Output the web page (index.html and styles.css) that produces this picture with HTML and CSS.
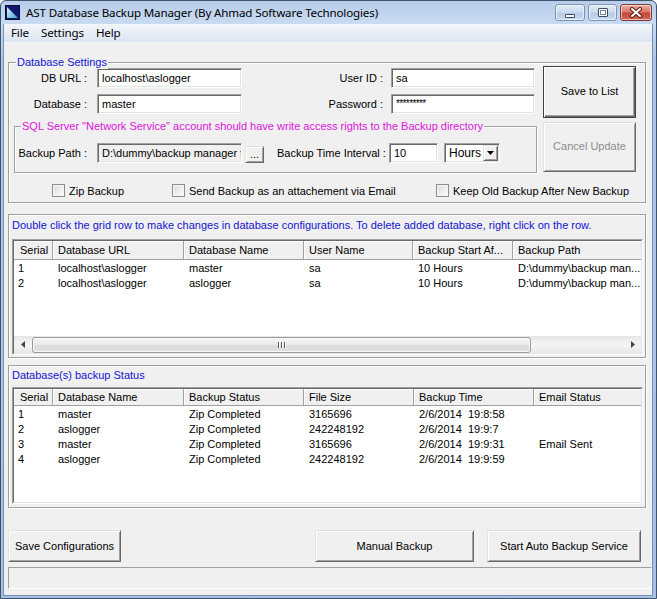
FILE: index.html
```html
<!DOCTYPE html>
<html>
<head>
<meta charset="utf-8">
<title>AST Database Backup Manager</title>
<link rel="stylesheet" href="styles.css">
</head>
<body>
<div class="window">
  <div class="titlebar">
    <svg class="app-icon" width="15" height="15" viewBox="0 0 15 15">
      <defs>
        <linearGradient id="ig" x1="0" y1="0" x2="1" y2="1">
          <stop offset="0" stop-color="#e8f4f8"/>
          <stop offset="1" stop-color="#3aa6c8"/>
        </linearGradient>
      </defs>
      <rect x="0.5" y="0.5" width="14" height="14" fill="#10186e" stroke="#0b0f2e"/>
      <polygon points="2,2 2,13 13,13" fill="url(#ig)"/>
    </svg>
    <span class="title">AST Database Backup Manager (By Ahmad Software Technologies)</span>
    <div class="caption-btns">
      <div class="cbtn"><span class="min-glyph"></span></div>
      <div class="cbtn"><span class="max-glyph"></span></div>
      <div class="cbtn close">
        <svg width="14" height="11" viewBox="0 0 14 11">
          <path d="M3 2 L11 9 M11 2 L3 9" stroke="#5a2018" stroke-width="4" stroke-linecap="round"/>
          <path d="M3 2 L11 9 M11 2 L3 9" stroke="#ffffff" stroke-width="2" stroke-linecap="round"/>
        </svg>
      </div>
    </div>
  </div>
  <div class="client">
    <div class="menubar">
      <span class="menu-item">File</span>
      <span class="menu-item">Settings</span>
      <span class="menu-item">Help</span>
    </div>
    <div class="form">
      <div class="group settings">
        <span class="group-title blue">Database Settings</span>
        <div class="settings-top">
          <div class="settings-left">
            <div class="fields">
              <span class="lbl">DB URL :</span>
              <div class="tb">localhost\aslogger</div>
              <span class="lbl lbl2">User ID :</span>
              <div class="tb">sa</div>
              <span class="lbl">Database :</span>
              <div class="tb">master</div>
              <span class="lbl lbl2">Password :</span>
              <div class="tb pw">*********</div>
            </div>
            <div class="group inner">
              <span class="group-title magenta">SQL Server "Network Service" account should have write access rights to the Backup directory</span>
              <div class="inner-row">
                <span class="lbl path-lbl">Backup Path :</span>
                <div class="tb ro path">D:\dummy\backup manager t</div>
                <div class="btn dots">...</div>
                <span class="time-lbl">Backup Time Interval :</span>
                <div class="tb num">10</div>
                <div class="combo">
                  <span class="combo-text">Hours</span>
                  <div class="combo-btn">
                    <svg width="7" height="4" viewBox="0 0 7 4"><polygon points="0,0 7,0 3.5,4" fill="#000"/></svg>
                  </div>
                </div>
              </div>
            </div>
          </div>
          <div class="settings-right">
            <div class="btn big default">Save to List</div>
            <div class="btn big disabled">Cancel Update</div>
          </div>
        </div>
        <div class="checks">
          <label class="chk"><span class="box"></span>Zip Backup</label>
          <label class="chk"><span class="box"></span>Send Backup as an attachement via Email</label>
          <label class="chk"><span class="box"></span>Keep Old Backup After New Backup</label>
        </div>
      </div>

      <div class="group panel p1">
        <div class="panel-label blue">Double click the grid row to make changes in database configurations. To delete added database, right click on the row.</div>
        <div class="lv lv1">
          <div class="lv-in">
            <div class="lv-row lv-head">
              <div class="hc">Serial</div>
              <div class="hc">Database URL</div>
              <div class="hc">Database Name</div>
              <div class="hc">User Name</div>
              <div class="hc">Backup Start Af...</div>
              <div class="hc last">Backup Path</div>
            </div>
            <div class="lv-body">
              <div class="lv-row">
                <span class="cell">1</span><span class="cell">localhost\aslogger</span><span class="cell">master</span><span class="cell">sa</span><span class="cell">10 Hours</span><span class="cell">D:\dummy\backup man...</span>
              </div>
              <div class="lv-row">
                <span class="cell">2</span><span class="cell">localhost\aslogger</span><span class="cell">aslogger</span><span class="cell">sa</span><span class="cell">10 Hours</span><span class="cell">D:\dummy\backup man...</span>
              </div>
            </div>
            <div class="hscroll">
              <div class="sarrow">
                <svg width="4" height="7" viewBox="0 0 4 7"><polygon points="4,0 4,7 0,3.5" fill="#444"/></svg>
              </div>
              <div class="strack">
                <div class="thumb">
                  <span class="grip"></span><span class="grip"></span><span class="grip"></span>
                </div>
              </div>
              <div class="sarrow">
                <svg width="4" height="7" viewBox="0 0 4 7"><polygon points="0,0 0,7 4,3.5" fill="#444"/></svg>
              </div>
            </div>
          </div>
        </div>
      </div>

      <div class="group panel p2">
        <div class="panel-label blue">Database(s) backup Status</div>
        <div class="lv lv2">
          <div class="lv-in">
            <div class="lv-row lv-head">
              <div class="hc">Serial</div>
              <div class="hc">Database Name</div>
              <div class="hc">Backup Status</div>
              <div class="hc">File Size</div>
              <div class="hc">Backup Time</div>
              <div class="hc last">Email Status</div>
            </div>
            <div class="lv-body">
              <div class="lv-row">
                <span class="cell">1</span><span class="cell">master</span><span class="cell">Zip Completed</span><span class="cell">3165696</span><span class="cell">2/6/2014&nbsp; 19:8:58</span><span class="cell"></span>
              </div>
              <div class="lv-row">
                <span class="cell">2</span><span class="cell">aslogger</span><span class="cell">Zip Completed</span><span class="cell">242248192</span><span class="cell">2/6/2014&nbsp; 19:9:7</span><span class="cell"></span>
              </div>
              <div class="lv-row">
                <span class="cell">3</span><span class="cell">master</span><span class="cell">Zip Completed</span><span class="cell">3165696</span><span class="cell">2/6/2014&nbsp; 19:9:31</span><span class="cell">Email Sent</span>
              </div>
              <div class="lv-row">
                <span class="cell">4</span><span class="cell">aslogger</span><span class="cell">Zip Completed</span><span class="cell">242248192</span><span class="cell">2/6/2014&nbsp; 19:9:59</span><span class="cell"></span>
              </div>
            </div>
          </div>
        </div>
      </div>

      <div class="actions">
        <div class="btn act save-cfg">Save Configurations</div>
        <div class="btn act manual">Manual Backup</div>
        <div class="btn act auto">Start Auto Backup Service</div>
      </div>
      <div class="statusbar"></div>
    </div>
  </div>
</div>
</body>
</html>
```

FILE: styles.css
```css
* { box-sizing: border-box; }
html, body { margin: 0; padding: 0; }
body {
  width: 657px;
  height: 599px;
  overflow: hidden;
  background: #ffffff;
  font-family: "Liberation Sans", Arial, sans-serif;
  font-size: 11px;
  color: #000;
}

/* ---------- window frame ---------- */
.window {
  width: 657px;
  height: 599px;
  display: flex;
  flex-direction: column;
  border: 1px solid #40546f;
  border-radius: 6px 6px 0 0;
  background: linear-gradient(#b7cdea 0, #c9dbf1 23px, #aac4e5 60px, #a6c1e3 100%);
}
.titlebar {
  height: 23px;
  flex: none;
  display: flex;
  align-items: flex-start;
  padding-left: 4px;
  padding-right: 4px;
}
.app-icon { margin-top: 4px; flex: none; }
.title {
  margin-left: 6px;
  margin-top: 3px;
  font-family: "Noto Sans", "Open Sans", sans-serif;
  font-size: 11.6px;
  letter-spacing: -0.15px;
  line-height: 17px;
  color: #000;
  white-space: nowrap;
}
.caption-btns {
  margin-left: auto;
  margin-top: 3px;
  display: flex;
  gap: 3px;
}
.cbtn {
  width: 29px;
  height: 17px;
  border: 1px solid #7d93b5;
  border-radius: 3px;
  background: linear-gradient(#e3ecf7 0, #cddcef 45%, #b9cce6 55%, #c8d9ee 100%);
  display: flex;
  align-items: center;
  justify-content: center;
  box-shadow: inset 0 0 0 1px rgba(255,255,255,0.55);
}
.cbtn:first-child { width: 30px; }
.cbtn.close {
  width: 32px;
  border-color: #7e3a30;
  background: linear-gradient(#e9aa9e 0, #d97b6a 45%, #c4473a 55%, #cf6a55 100%);
}
.min-glyph {
  width: 10px;
  height: 4px;
  margin-top: 6px;
  border: 1px solid #3b4b66;
  border-radius: 1px;
  background: #ffffff;
}
.max-glyph {
  width: 10px;
  height: 9px;
  border: 1px solid #3b4b66;
  border-radius: 1px;
  background: #ffffff;
  box-shadow: inset 0 0 0 1px #ffffff, inset 0 0 0 2px #7a8aa5;
}

.client {
  flex: 1;
  display: flex;
  flex-direction: column;
  margin: 0 3px 2px 2px;
  background: #f0f0f0;
  border: 1px solid #7890b2;
  border-top: none;
}
.menubar {
  height: 19px;
  flex: none;
  display: flex;
  align-items: center;
  padding-left: 1px;
  background: linear-gradient(#f3f6fb, #dbe5f3);
  border-bottom: 1px solid #f5f7fb;
  font-family: "Noto Sans", "Open Sans", sans-serif;
  font-size: 11.6px;
  letter-spacing: -0.15px;
}
.menu-item { padding: 0 6px; line-height: 18px; }

.form {
  flex: 1;
  display: flex;
  flex-direction: column;
  padding-left: 4px;
}

/* ---------- group boxes ---------- */
.group {
  position: relative;
  border: 1px solid #a0a0a0;
  box-shadow: inset 1px 1px 0 #ffffff, 1px 1px 0 #ffffff;
}
.group-title {
  position: absolute;
  top: -7px;
  left: 7px;
  padding: 0 1px;
  line-height: 13px;
  background: #f0f0f0;
  white-space: nowrap;
}
.blue { color: #1414d2; }
.magenta { color: #dc14dc; }

.settings {
  margin-top: 19px;
  width: 638px;
  height: 141px;
}
.settings-top {
  display: flex;
  padding: 3px 0 0 5px;
}
.settings-left { width: 523px; }
.fields {
  margin-top: 2px;
  display: grid;
  grid-template-columns: 83px 145px 149px 144px;
  grid-template-rows: 20px 20px;
  row-gap: 6px;
}
.lbl {
  line-height: 20px;
  text-align: right;
  padding-right: 10px;
  white-space: nowrap;
}
.lbl2 { padding-right: 8px; }

.tb {
  height: 20px;
  border: 1px solid;
  border-color: #a0a0a0 #ffffff #ffffff #a0a0a0;
  box-shadow: inset 1px 1px 0 #696969, inset -1px -1px 0 #e3e3e3;
  background: #ffffff;
  padding-left: 4px;
  line-height: 18px;
  white-space: nowrap;
  overflow: hidden;
}
.tb.ro { background: #f0f0f0; }
.pw { font-size: 10px; letter-spacing: -0.6px; line-height: 17px; }

.inner {
  margin-top: 12px;
  height: 47px;
  padding-top: 16px;
}
.inner .group-title { left: 6px; }
.inner-row {
  display: flex;
  align-items: center;
  height: 20px;
}
.path-lbl { width: 72px; padding-right: 0; margin-right: 10px; }
.path { width: 145px; padding-right: 0; }
.dots {
  margin-left: 3px;
  width: 19px;
  height: 17px;
  margin-top: 2px;
  line-height: 13px;
  font-size: 11px;
}
.time-lbl { margin-left: 13px; width: 112px; white-space: nowrap; }
.num { width: 49px; }
.combo {
  margin-left: 6px;
  width: 56px;
  height: 20px;
  display: flex;
  border: 1px solid;
  border-color: #a0a0a0 #ffffff #ffffff #a0a0a0;
  box-shadow: inset 1px 1px 0 #696969, inset -1px -1px 0 #e3e3e3;
  background: #ffffff;
  padding: 1px;
}
.combo-text { flex: 1; padding-left: 3px; line-height: 17px; font-size: 12px; }
.combo-btn {
  width: 15px;
  height: 16px;
  border: 1px solid;
  border-color: #e3e3e3 #696969 #696969 #e3e3e3;
  box-shadow: inset 1px 1px 0 #ffffff, inset -1px -1px 0 #a0a0a0;
  background: #f0f0f0;
  display: flex;
  align-items: center;
  justify-content: center;
}

/* ---------- buttons ---------- */
.btn {
  border: 1px solid;
  border-color: #e3e3e3 #696969 #696969 #e3e3e3;
  box-shadow: inset 1px 1px 0 #ffffff, inset -1px -1px 0 #a0a0a0;
  background: #f0f0f0;
  display: flex;
  align-items: center;
  justify-content: center;
  white-space: nowrap;
}
.settings-right {
  margin-left: 6px;
  width: 93px;
  display: flex;
  flex-direction: column;
  gap: 4px;
}
.big { height: 52px; font-size: 11px; padding-bottom: 2px; }
.big.disabled { height: 50px; color: #8d8d8d; }
.btn.default {
  border-color: #404040;
  box-shadow: inset 1px 1px 0 #ffffff, inset -1px -1px 0 #696969, inset -2px -2px 0 #a0a0a0;
}

/* ---------- checkboxes ---------- */
.checks {
  margin-top: 11px;
  display: grid;
  grid-template-columns: 120px 264px auto;
  padding-left: 43px;
  height: 13px;
}
.chk {
  display: flex;
  align-items: center;
  gap: 4px;
  white-space: nowrap;
  line-height: 12px;
}
.box {
  width: 13px;
  height: 13px;
  flex: none;
  border: 1px solid #8e8f8f;
  background: linear-gradient(135deg, #dcdcdc, #ffffff);
  box-shadow: inset 0 0 0 1px #f4f4f4;
}

/* ---------- panels ---------- */
.panel { width: 638px; padding: 4px 0 0 3px; }
.p1 { margin-top: 11px; height: 144px; }
.p2 { margin-top: 7px; height: 143px; padding-top: 3px; }
.panel-label { line-height: 13px; white-space: nowrap; }

.lv {
  width: 631px;
  border: 1px solid;
  border-color: #a0a0a0 #ffffff #ffffff #a0a0a0;
}
.lv1 { margin-top: 7px; height: 116px; }
.lv2 { margin-top: 5px; height: 117px; }
.lv-in {
  height: 100%;
  border: 1px solid;
  border-color: #696969 #e3e3e3 #e3e3e3 #696969;
  background: #ffffff;
  display: flex;
  flex-direction: column;
  overflow: hidden;
}
.lv-row {
  display: grid;
  line-height: 15px;
  white-space: nowrap;
}
.lv1 .lv-row { grid-template-columns: 39px 131px 120px 109px 100px 1fr; }
.lv2 .lv-row { grid-template-columns: 39px 131px 120px 110px 120px 1fr; }
.lv-head { height: 19px; flex: none; }
.lv2 .lv-head { height: 17px; }
.hc {
  background: #f0f0f0;
  border-right: 1px solid #a0a0a0;
  border-bottom: 1px solid #a0a0a0;
  box-shadow: inset 1px 1px 0 #ffffff;
  line-height: 18px;
  padding-left: 5px;
  overflow: hidden;
}
.lv2 .hc { line-height: 16px; }
.hc:first-child { padding-left: 6px; }
.hc.last { border-right: none; }
.lv-body { padding-top: 1px; flex: 1; }
.cell { padding-left: 5px; overflow: hidden; }
.cell:first-child { padding-left: 4px; }

.hscroll {
  height: 17px;
  flex: none;
  display: flex;
  background: linear-gradient(#e6e6e6, #f2f2f2 40%, #f2f2f2 60%, #e8e8e8);
}
.sarrow {
  width: 17px;
  display: flex;
  align-items: center;
  justify-content: center;
}
.strack { flex: 1; display: flex; align-items: center; }
.thumb {
  margin-left: 1px;
  width: 499px;
  height: 16px;
  border: 1px solid #9a9a9a;
  border-radius: 3px;
  background: linear-gradient(#f6f6f6, #e9e9e9 50%, #dcdcdc 51%, #e0e0e0);
  box-shadow: inset 0 0 0 1px #fbfbfb;
  display: flex;
  align-items: center;
  justify-content: center;
  gap: 2px;
}
.grip {
  width: 1px;
  height: 6px;
  background: #5a5a5a;
  box-shadow: 1px 0 0 #ffffff;
}

/* ---------- bottom ---------- */
.actions {
  margin-top: 22px;
  width: 638px;
  display: flex;
  padding-right: 5px;
}
.act { height: 32px; font-size: 11px; }
.save-cfg { width: 113px; }
.manual { width: 159px; margin-left: auto; }
.auto { width: 154px; margin-left: 13px; }
.statusbar {
  margin-top: 5px;
  width: 644px;
  height: 22px;
  border: 1px solid;
  border-color: #a0a0a0 #ffffff #ffffff #a0a0a0;
}
```
